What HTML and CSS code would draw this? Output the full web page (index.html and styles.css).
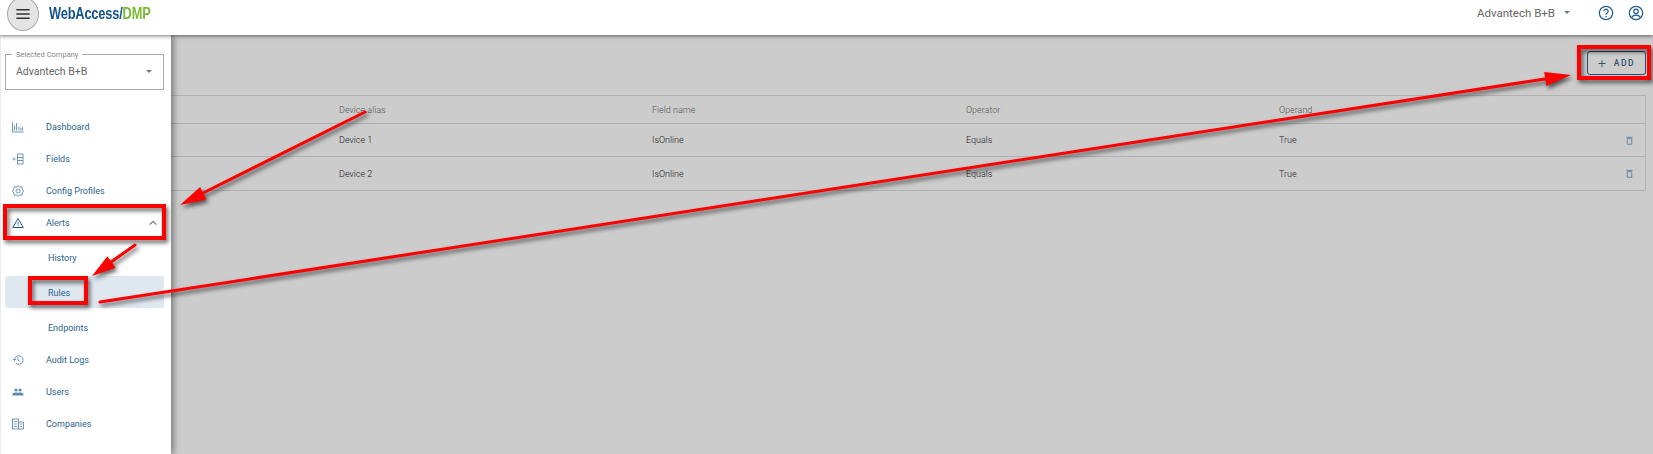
FILE: index.html
```html
<!DOCTYPE html>
<html lang="en">
<head>
    <meta charset="UTF-8">
    <title>WebAccess/DMP - Alert rules</title>
    <link rel="stylesheet" href="styles.css">
</head>
<body>
    <header class="topbar">
        <button class="menu-btn" aria-label="Menu">
            <svg viewBox="0 0 24 24" width="20" height="20"><path d="M4 7h16M4 12h16M4 17h16" stroke="#333" stroke-width="1.800"/></svg>
        </button>
        <div class="logo">WebAccess/<span class="logo-green">DMP</span></div>
        <div class="top-right">
            <span class="company-name">Advantech B+B</span>
            <span class="caret caret-top"></span>
            <svg class="top-icon" viewBox="0 0 24 24" width="16" height="16"><circle cx="12" cy="12" r="10" fill="none" stroke="#1d5a8c" stroke-width="1.800"/><path d="M8.800 9.400a3.200 3.200 0 1 1 5 2.600c-1.200.8-1.800 1.400-1.800 2.800" fill="none" stroke="#1d5a8c" stroke-width="1.800"/><circle cx="12" cy="17.600" r="1.200" fill="#1d5a8c"/></svg>
            <svg class="top-icon" viewBox="0 0 24 24" width="16" height="16"><circle cx="12" cy="12" r="10" fill="none" stroke="#1d5a8c" stroke-width="1.800"/><circle cx="12" cy="9.500" r="3.400" fill="none" stroke="#1d5a8c" stroke-width="1.800"/><path d="M5.500 18.500c1.600-2.400 4-3.300 6.500-3.300s4.900.9 6.500 3.300" fill="none" stroke="#1d5a8c" stroke-width="1.800"/></svg>
        </div>
    </header>

    <div class="page">
        <aside class="sidebar">
            <fieldset class="company-select">
                <legend>Selected Company</legend>
                <span>Advantech B+B</span>
                <span class="caret"></span>
            </fieldset>

            <nav class="nav">
                <a class="nav-item">
                    <svg class="nav-icon" viewBox="0 0 24 24"><path d="M1 2v20h22M5 19V9M9 19V4M14 19v-8M18 19v-5M21 19v-7" fill="none" stroke="#5f8ab0" stroke-width="1.800"/></svg>
                    Dashboard
                </a>
                <a class="nav-item">
                    <svg class="nav-icon" viewBox="0 0 24 24"><path d="M1 12h6M4 9v6" stroke="#5f8ab0" stroke-width="1.500" fill="none"/><path d="M11 2h11v20H11zM11 9h11M11 15h11" stroke="#5f8ab0" stroke-width="1.800" fill="none"/></svg>
                    Fields
                </a>
                <a class="nav-item">
                    <svg class="nav-icon" viewBox="0 0 24 24"><path d="M12 1.500l3 2.500 4.500-.5 1 4.500 2.500 4-2.500 4-1 4.500-4.500-.5-3 2.500-3-2.500-4.500.5-1-4.500-2.500-4 2.500-4 1-4.500 4.500.5z" fill="none" stroke="#5f8ab0" stroke-width="1.800"/><circle cx="12" cy="12" r="4" fill="none" stroke="#5f8ab0" stroke-width="1.800"/></svg>
                    Config Profiles
                </a>
                <a class="nav-item">
                    <svg class="nav-icon" viewBox="0 0 24 24"><path d="M12 3L1.500 21h21z" fill="none" stroke="#1d5a8c" stroke-width="2"/><path d="M12 9.500v6M12 17v2" stroke="#1d5a8c" stroke-width="1.600"/></svg>
                    Alerts
                    <svg class="chevron" viewBox="0 0 24 24" width="10" height="10"><path d="M4 16l8-8 8 8" fill="none" stroke="#777" stroke-width="3"/></svg>
                </a>
                <div class="sub-nav">
                    <a class="sub-item">History</a>
                    <a class="sub-item sub-active">Rules</a>
                    <a class="sub-item">Endpoints</a>
                </div>
                <a class="nav-item">
                    <svg class="nav-icon" viewBox="0 0 24 24"><path d="M5 12a8.500 8.500 0 1 1 2.500 6M1.500 9.500L5 13l3.500-3.500" fill="none" stroke="#5f8ab0" stroke-width="1.800"/><path d="M12 7v5.500l3.500 2" fill="none" stroke="#5f8ab0" stroke-width="1.800"/></svg>
                    Audit Logs
                </a>
                <a class="nav-item">
                    <svg class="nav-icon" viewBox="0 0 24 24"><circle cx="8" cy="8" r="3.200" fill="#5f8ab0"/><circle cx="16" cy="8" r="3.200" fill="#5f8ab0"/><path d="M1 19v-2.500C1 14 5 13 8 13s4 .5 4 .5.900-.5 4-.5 7 1 7 3.500V19z" fill="#5f8ab0"/></svg>
                    Users
                </a>
                <a class="nav-item">
                    <svg class="nav-icon" viewBox="0 0 24 24"><path d="M1 2h12v20H1zM13 8h10v14H13zM4 7h6M4 12h6M4 17h6M16 12h4M16 17h4" fill="none" stroke="#5f8ab0" stroke-width="1.800"/></svg>
                    Companies
                </a>
            </nav>
        </aside>

        <main class="content">
            <div class="toolbar">
                <button class="add-btn"><span class="plus">+</span>ADD</button>
            </div>
            <div class="rules-table">
                <div class="row head-row">
                    <span></span>
                    <span>Device alias</span>
                    <span>Field name</span>
                    <span>Operator</span>
                    <span>Operand</span>
                    <span></span>
                </div>
                <div class="row">
                    <span></span>
                    <span>Device 1</span>
                    <span>IsOnline</span>
                    <span>Equals</span>
                    <span>True</span>
                    <svg class="trash" viewBox="0 0 24 24"><path d="M6 7h12v15H6zM3.500 3.500h17" fill="none" stroke="#5d83a5" stroke-width="2.400"/></svg>
                </div>
                <div class="row">
                    <span></span>
                    <span>Device 2</span>
                    <span>IsOnline</span>
                    <span>Equals</span>
                    <span>True</span>
                    <svg class="trash" viewBox="0 0 24 24"><path d="M6 7h12v15H6zM3.500 3.500h17" fill="none" stroke="#5d83a5" stroke-width="2.400"/></svg>
                </div>
            </div>
        </main>
    </div>

    <!-- red annotations drawn over the screenshot -->
    <svg class="marks" viewBox="0 0 1653 454" width="1653" height="454">
        <g class="mark-shapes">
            <rect x="5" y="206" width="159" height="32"/>
            <rect x="30" y="278" width="56" height="25"/>
            <rect x="1579" y="47" width="70" height="31"/>
            <line x1="365" y1="112" x2="203" y2="193"/>
            <polygon points="180,205 206.300,199.600 200.100,187"/>
            <line x1="135" y1="245" x2="111" y2="262"/>
            <polygon points="92,276 115.600,267.700 107.400,256.300"/>
            <line x1="100" y1="302" x2="1548" y2="78.500"/>
            <polygon points="1571,75 1546.400,85.900 1544.200,72.100"/>
        </g>
    </svg>
</body>
</html>
```

FILE: styles.css
```css
* {
    box-sizing: border-box;
}

body {
    margin: 0;
    height: 454px;
    overflow: hidden;
    font-family: Roboto, "Liberation Sans", sans-serif;
    background-color: #ccc;
    color: #222;
}

/* Top bar */
.topbar {
    position: relative;
    z-index: 3;
    display: flex;
    align-items: center;
    height: 35px;
    padding-left: 7px;
    padding-right: 9px;
    background: #fff;
    box-shadow: 0 1px 4px rgba(0, 0, 0, 0.55);
}

.menu-btn {
    display: flex;
    align-items: center;
    justify-content: center;
    width: 32px;
    height: 34px;
    margin-top: -7px;
    padding: 0;
    border: 1px solid #a8a8a8;
    border-radius: 50%;
    background: #e4e4e4;
}

.logo {
    margin-left: 10px;
    margin-top: -7px;
    font-family: "Liberation Sans", sans-serif;
    font-size: 16px;
    font-weight: 700;
    letter-spacing: -0.2px;
    color: #14528c;
    transform: scaleX(0.8);
    transform-origin: left center;
}

.logo-green {
    color: #7ab834;
}

.top-right {
    display: flex;
    align-items: center;
    margin-left: auto;
    margin-top: -10px;
    font-size: 11.500px;
    color: #666;
}

.caret {
    width: 0;
    height: 0;
    border-left: 3px solid transparent;
    border-right: 3px solid transparent;
    border-top: 3px solid #777;
}

.caret-top {
    margin-left: 9px;
    margin-right: 28px;
}

.top-icon + .top-icon {
    margin-left: 14px;
}

/* Sidebar and content */
.page {
    display: flex;
    height: 419px;
}

.sidebar {
    position: relative;
    z-index: 2;
    flex: 0 0 171px;
    padding: 15px 7px 0 5px;
    border-left: 1px solid #ececec;
    background: #fff;
    box-shadow: 2px 0 7px rgba(0, 0, 0, 0.45);
}

.company-select {
    display: flex;
    align-items: center;
    justify-content: space-between;
    height: 40px;
    margin: 0 0 20px -1px;
    padding: 0 11px 6px 10px;
    border: 1px solid #a9a9a9;
    font-size: 10.500px;
    color: #666;
}

.company-select legend {
    margin-left: -4px;
    padding: 0 4px;
    font-size: 7.500px;
    color: #888;
}

.nav {
    display: flex;
    flex-direction: column;
}

.nav-item {
    display: flex;
    align-items: center;
    height: 32px;
    padding-top: 2px;
    padding-left: 6px;
    font-size: 9px;
    color: #2a5f90;
}

.nav-icon {
    flex: none;
    width: 12px;
    height: 12px;
    margin-right: 22px;
}

.chevron {
    margin-left: auto;
    margin-right: 6px;
}

.sub-nav {
    display: flex;
    flex-direction: column;
    gap: 3px;
    margin-top: 3px;
}

.sub-item {
    display: flex;
    align-items: center;
    height: 32px;
    margin-left: -1px;
    padding-top: 1px;
    padding-left: 43px;
    border-radius: 3px;
    font-size: 9px;
    color: #2a5f90;
}

.sub-active {
    background: #dfe7ef;
}

.content {
    flex: 1;
    display: flex;
    flex-direction: column;
    gap: 20px;
    padding: 16px 7px 0 0;
}

.toolbar {
    display: flex;
    justify-content: flex-end;
}

.add-btn {
    display: flex;
    align-items: center;
    justify-content: center;
    width: 59px;
    height: 24px;
    padding: 0;
    border: 1px solid #1d4f7a;
    border-radius: 3px;
    background: transparent;
    font-family: inherit;
    font-size: 8.500px;
    font-weight: 500;
    letter-spacing: 1.500px;
    color: #33536f;
}

.plus {
    margin-right: 8px;
    font-size: 14px;
    font-weight: 300;
    letter-spacing: 0;
}

.rules-table {
    border: 1px solid #b1b1b1;
    border-left: none;
}

.row {
    display: grid;
    grid-template-columns: 168px 313px 314px 313px 1fr 20px;
    align-items: center;
    height: 33px;
    font-size: 9px;
    font-weight: 300;
    color: #222;
    border-bottom: 1px solid #b1b1b1;
}

.row:last-child {
    border-bottom: none;
}

.head-row {
    height: 28px;
    color: #555;
}

.trash {
    width: 9px;
    height: 11px;
}

/* Annotations */
.marks {
    position: absolute;
    top: 0;
    left: 0;
    z-index: 5;
    pointer-events: none;
}

.mark-shapes {
    filter: drop-shadow(2px 3px 2px rgba(0, 0, 0, 0.6));
}

.mark-shapes rect {
    fill: none;
    stroke: #f00;
    stroke-width: 4;
}

.mark-shapes line {
    stroke: #f00;
    stroke-width: 3;
    stroke-linecap: round;
}

.mark-shapes polygon {
    fill: #f00;
}
```
